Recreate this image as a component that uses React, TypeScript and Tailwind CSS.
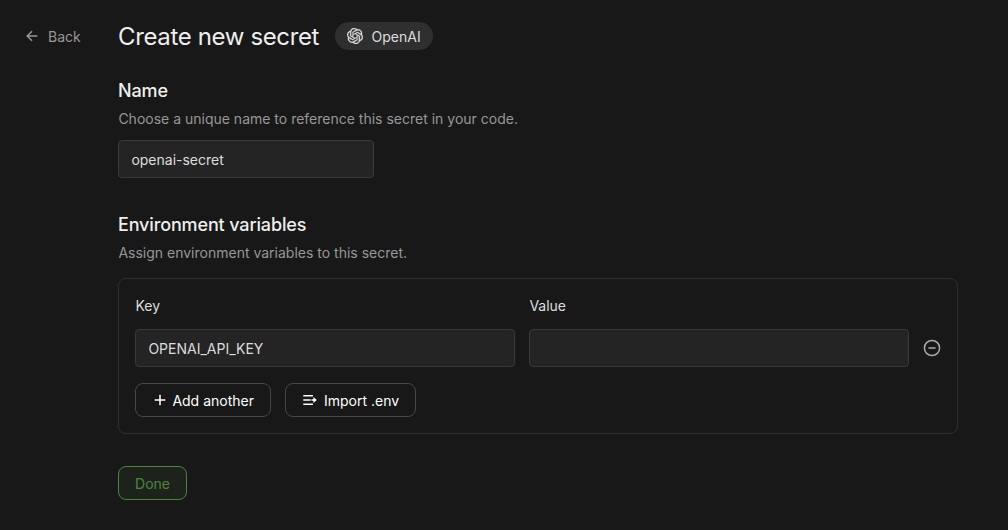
import type { ReactNode } from "react";
import { SiOpenai } from "react-icons/si";

function ArrowLeft() {
  return (
    <svg width="16" height="16" viewBox="0 0 16 16" fill="none" stroke="currentColor" strokeWidth="1.5">
      <path d="M13.3 8H3.4M8 3.2L3.2 8 8 12.8" />
    </svg>
  );
}

function Plus() {
  return (
    <svg width="16" height="16" viewBox="0 0 16 16" fill="none" stroke="currentColor" strokeWidth="1.5">
      <path d="M2.7 8h10.6M8 2.7v10.6" />
    </svg>
  );
}

function ImportLines() {
  return (
    <svg width="16" height="16" viewBox="0 0 16 16" fill="none" stroke="currentColor" strokeWidth="1.5">
      <path d="M1.3 3.7h9.6M1.3 8h7.2M1.3 12.3h9.6M9.4 8h4" />
      <path d="M11.4 4.9L14.8 8l-3.4 3.1z" fill="currentColor" stroke="none" />
    </svg>
  );
}

function MinusCircle() {
  return (
    <svg width="18" height="18" viewBox="0 0 18 18" fill="none" stroke="currentColor" strokeWidth="1.5">
      <circle cx="9" cy="9" r="7.6" />
      <path d="M5.4 9h7.2" />
    </svg>
  );
}

function TextField({ label, value, className }: { label: string; value: string; className: string }) {
  return (
    <input
      aria-label={label}
      defaultValue={value}
      className={`h-[38px] rounded border border-[#3a3a3a] bg-[#242424] pr-3 pl-[12.4px] text-sm outline-none ${className}`}
    />
  );
}

function OutlineButton({ children, className }: { children: ReactNode; className: string }) {
  return (
    <button
      className={`flex h-[34px] items-center rounded-lg border border-[#464646] pl-4 text-sm text-white ${className}`}
    >
      {children}
    </button>
  );
}

export default function App() {
  return (
    <div className="flex h-[530px] w-[1008px] bg-[#181818] pt-5 font-['Inter',sans-serif] text-sm text-[#dddddd]">
      <a className="flex h-8 w-[118px] shrink-0 items-center gap-2 pl-6 text-[#979797]">
        <ArrowLeft />
        <span className="pt-0.5">Back</span>
      </a>

      <main className="w-[840px]">
        <header className="flex h-8 items-center gap-4">
          <h1 className="pt-0.5 text-2xl tracking-[-0.36px] text-[#eeeeee]">Create new secret</h1>
          <span className="flex h-7 w-[98px] items-center gap-2 rounded-full bg-[#2f2f2f] pl-3">
            <SiOpenai className="size-4 stroke-current stroke-[0.5]" />
            <span className="pt-0.5 pl-[0.5px]">OpenAI</span>
          </span>
        </header>

        <section className="mt-[25px]">
          <h2 className="text-lg leading-7 font-medium tracking-[-0.14px] text-[#eeeeee]">Name</h2>
          <p className="mt-1 pl-[0.4px] leading-5 text-[#979797]">
            Choose a unique name to reference this secret in your code.
          </p>
          <TextField label="Name" value="openai-secret" className="mt-[11px] block w-64" />
        </section>

        <section className="mt-[33px]">
          <h2 className="text-lg leading-7 font-medium tracking-[-0.14px] text-[#eeeeee]">Environment variables</h2>
          <p className="mt-1 pl-[0.4px] leading-5 text-[#979797]">Assign environment variables to this secret.</p>

          <div className="mt-[15px] h-[156px] rounded-lg border border-[#2f2f2f] p-4">
            <div className="grid grid-cols-[380px_380px] gap-x-3.5 pl-[0.4px] leading-[22px]">
              <span>Key</span>
              <span>Value</span>
            </div>
            <div className="mt-3 flex items-center gap-3.5">
              <TextField label="Key" value="OPENAI_API_KEY" className="w-[380px]" />
              <TextField label="Value" value="" className="w-[380px]" />
              <button aria-label="Remove variable" className="text-[#a8a8a8]">
                <MinusCircle />
              </button>
            </div>
            <div className="mt-4 flex gap-3.5">
              <OutlineButton className="w-[136px] gap-1">
                <Plus />
                <span className="pt-0.5 pl-[0.4px]">Add another</span>
              </OutlineButton>
              <OutlineButton className="w-[131px] gap-1.5">
                <ImportLines />
                <span className="pt-0.5">Import .env</span>
              </OutlineButton>
            </div>
          </div>
        </section>

        <button
          disabled
          className="mt-8 flex h-[34px] w-[69px] items-center justify-center rounded-lg border border-[#7fee64] bg-[#7fee64]/10 pt-0.5 text-[#7fee64] opacity-50"
        >
          Done
        </button>
      </main>
    </div>
  );
}
